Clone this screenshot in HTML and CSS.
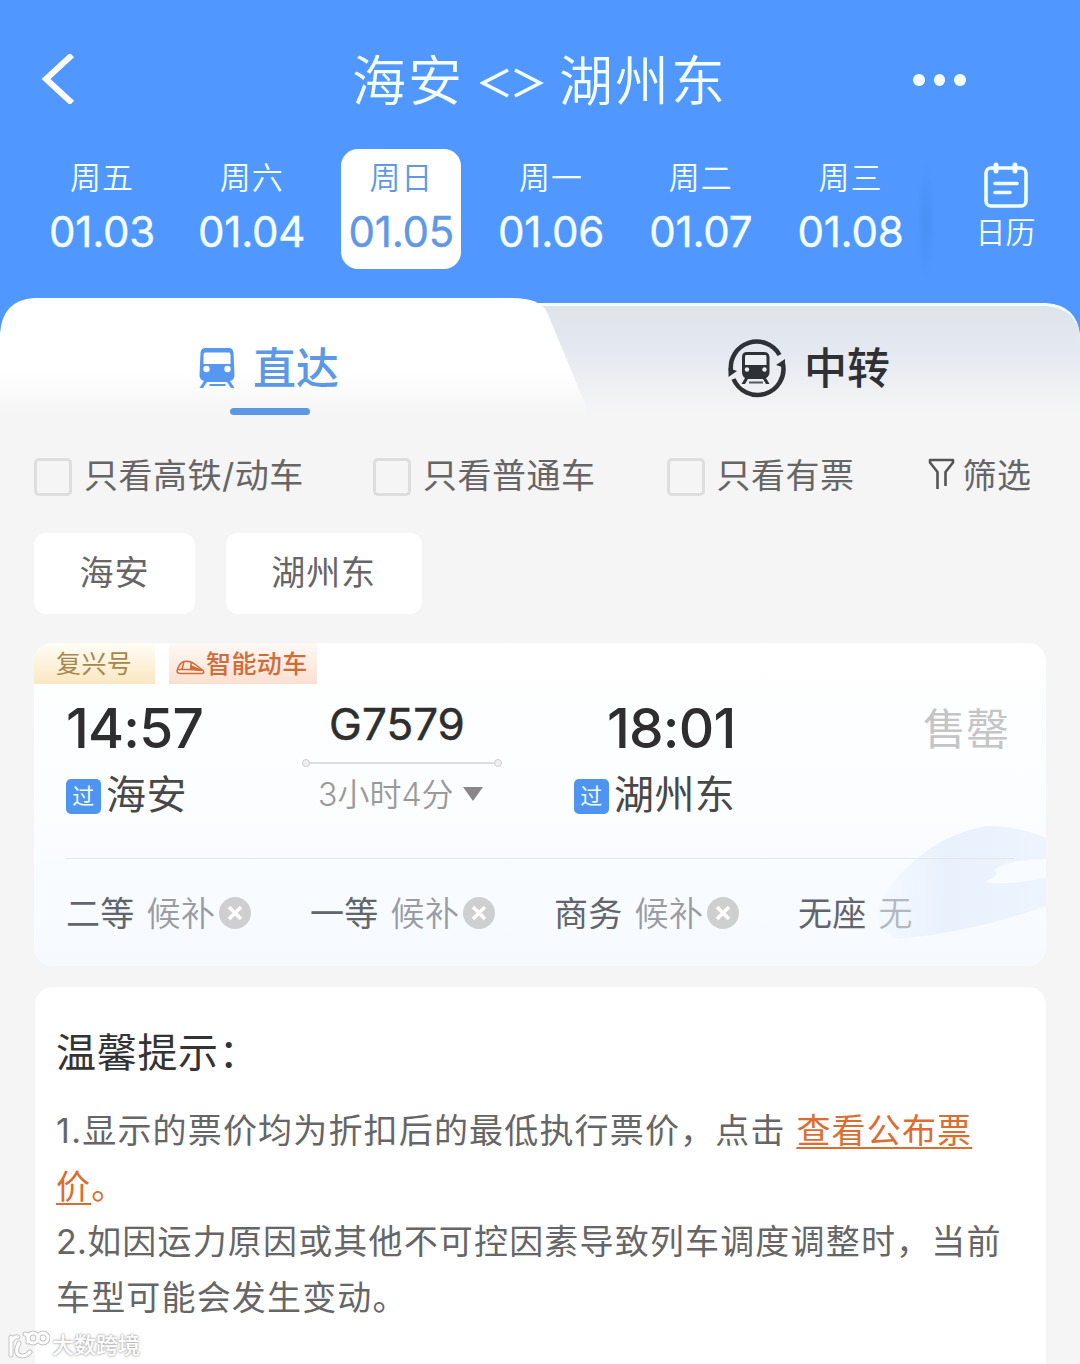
FILE: index.html
```html
<!DOCTYPE html>
<html lang="zh-CN">

<head>
    <meta charset="utf-8">
    <title>海安 - 湖州东</title>
    <meta name="viewport" content="width=device-width, initial-scale=1">
    <link rel="stylesheet" href="styles.css">
</head>

<body>
    <header class="header">
        <div class="navbar">
            <svg class="back" width="36" height="50" viewBox="0 0 36 50">
                <path d="M32 1 6 25 32 49" fill="none" stroke="#fff" stroke-width="6" />
            </svg>
            <h1 class="title"><span>海安</span><svg class="arrows" width="64" height="32" viewBox="0 0 64 32" fill="none" stroke="#f4ffff" stroke-width="3.600"><path d="M28 3 3 16 28 29M35 3 60 16 35 29" /></svg><span>湖州东</span></h1>
            <div class="more"><i></i><i></i><i></i></div>
        </div>
        <div class="dates">
            <div class="day"><span class="week">周五</span><span class="date">01.03</span></div>
            <div class="day"><span class="week">周六</span><span class="date">01.04</span></div>
            <div class="day active"><span class="week">周日</span><span class="date">01.05</span></div>
            <div class="day"><span class="week">周一</span><span class="date">01.06</span></div>
            <div class="day"><span class="week">周二</span><span class="date">01.07</span></div>
            <div class="day"><span class="week">周三</span><span class="date">01.08</span></div>
            <div class="calendar">
                <svg width="46" height="46" viewBox="0 0 46 46" fill="none" stroke="#f0ffff" stroke-width="3.600" stroke-linecap="round">
                    <rect x="3" y="6" width="40" height="38" rx="5" />
                    <path d="M13 3v6M32 3v6" stroke-width="5" />
                    <path d="M12 21.500h22M12 30.500h15" />
                </svg>
                <span>日历</span>
            </div>
        </div>
    </header>

    <nav class="tabs">
        <svg class="tabs-bg" width="1080" height="122" viewBox="0 0 1080 122">
            <defs>
                <linearGradient id="tabLeft" x1="0" y1="0" x2="0" y2="1">
                    <stop offset="0.6" stop-color="#fff" />
                    <stop offset="0.97" stop-color="#f5f5f5" />
                </linearGradient>
                <linearGradient id="tabRight" gradientUnits="userSpaceOnUse" x1="0" y1="8" x2="0" y2="114">
                    <stop offset="0" stop-color="#dfe3ea" />
                    <stop offset="0.4" stop-color="#e4e8f0" />
                    <stop offset="1" stop-color="#f5f5f5" />
                </linearGradient>
            </defs>
            <rect width="1080" height="60" fill="#5098ff" />
            <path d="M500 5h546q31 2 34 32v83H500z" fill="#f4fdff" />
            <path d="M500 8h545q33 2 35 32v82H500z" fill="url(#tabRight)" />
            <path d="M0 36Q2 2 34 0H512Q540 0 547 14L586 108V122H0z" fill="url(#tabLeft)" />
        </svg>
        <div class="tab tab-direct">
            <svg width="36" height="42" viewBox="0 0 36 42">
                <path d="M6 1H30Q34 1 34.500 6L35.500 28Q35.500 33 31 34L35.500 41H32L28 35H8L4 41H.5L5 34Q.5 33 .5 28L1.500 6Q2 1 6 1z" fill="#5697f0" />
                <path d="M6 5.500H30Q31.500 5.500 31.500 8V17H4.500V8Q4.500 5.500 6 5.500z" fill="#fff" />
                <circle cx="7.500" cy="22" r="3.200" fill="#fff" />
                <circle cx="28.500" cy="22" r="3.200" fill="#fff" />
                <path d="M10.500 38h16" stroke="#5697f0" stroke-width="2" />
            </svg>
            <span>直达</span>
        </div>
        <div class="tab tab-transfer">
            <svg width="58" height="60" viewBox="0 0 58 60">
                <g fill="none" stroke="#2e3236" stroke-width="4.500">
                    <path d="M3 33A26 26 0 0 1 51.500 17" />
                    <path d="M55 26A26 26 0 0 1 5.500 41" />
                </g>
                <path d="M.5 39V30L9 33zM57 21V30L48 27z" fill="#2e3236" />
                <path d="M19 14H36Q41 14 41.500 19V34Q41.500 38 38 40L41.500 46H38L35 41H20L17 46H13.500L17 40Q14 38 14 34V19Q14 14 19 14z" fill="#2e3236" />
                <path d="M18 17H37.500Q38.500 17 38.500 19V27H17V19Q17 17 18 17z" fill="#eceff4" />
                <circle cx="19" cy="31.500" r="2.200" fill="#eceff4" />
                <circle cx="36.500" cy="31.500" r="2.200" fill="#eceff4" />
                <path d="M21 44.500h14" stroke="#555a60" stroke-width="2" />
            </svg>
            <span>中转</span>
        </div>
    </nav>

    <section class="filters">
        <label class="check"><i class="box"></i>只看高铁/动车</label>
        <label class="check"><i class="box"></i>只看普通车</label>
        <label class="check"><i class="box"></i>只看有票</label>
        <div class="screen">
            <svg width="27" height="32" viewBox="0 0 27 32" fill="none" stroke="#555" stroke-width="2.600" stroke-linejoin="round">
                <path d="M9.500 31V14L2 4.500V2H25V4.500L17.500 14V28" />
            </svg>
            筛选
        </div>
    </section>

    <section class="stations">
        <div class="station">海安</div>
        <div class="station">湖州东</div>
    </section>

    <section class="train">
        <svg class="train-bg" width="172" height="116" viewBox="0 0 172 116">
            <defs>
                <linearGradient id="loco" x1="0" y1="0" x2="1" y2="0">
                    <stop offset="0" stop-color="#ecf3fe" stop-opacity="0.3" />
                    <stop offset="0.4" stop-color="#e9f1fd" />
                    <stop offset="1" stop-color="#ecf4fe" />
                </linearGradient>
            </defs>
            <path d="M172 14Q145 2 112 2Q70 10 40 37Q14 60 4 84Q2 110 26 115Q100 108 172 82z" fill="url(#loco)" />
            <path d="M172 35Q135 35 120 46Q128 51 110 58Q130 62 172 54z" fill="#f8fbff" />
        </svg>
        <div class="tags">
            <span class="tag tag-gold">复兴号</span>
            <span class="tag tag-orange">
                <svg width="29" height="15" viewBox="0 0 29 15" fill="none" stroke="#cf6c38" stroke-width="1.500">
                    <path d="M1 11Q3 3 8 1.500Q14 0 20 5L27 10.500Q29 13 26 13.500H5Q1 13.500 1 11zM2 9.500H15V1.500M8 1.500L6 9.500" />
                    <path d="M15 6L26 10.500 15 9.500z" fill="#cf6c38" />
                </svg>智能动车
            </span>
        </div>
        <div class="trip">
            <div class="stop">
                <div class="time">14:57</div>
                <div class="place"><b class="pass">过</b>海安</div>
            </div>
            <div class="route">
                <div class="number">G7579</div>
                <div class="line"></div>
                <div class="duration"><span><em>3</em>小时<em>4</em>分</span><i class="caret"></i></div>
            </div>
            <div class="stop stop-end">
                <div class="time">18:01</div>
                <div class="place"><b class="pass">过</b>湖州东</div>
            </div>
            <div class="soldout">售罄</div>
        </div>
        <div class="seats">
            <div class="seat">二等<span class="wait">候补</span><svg class="close" viewBox="0 0 32 32"><circle cx="16" cy="16" r="16" /><path d="M10 10l12 12M22 10l-12 12" /></svg></div>
            <div class="seat">一等<span class="wait">候补</span><svg class="close" viewBox="0 0 32 32"><circle cx="16" cy="16" r="16" /><path d="M10 10l12 12M22 10l-12 12" /></svg></div>
            <div class="seat">商务<span class="wait">候补</span><svg class="close" viewBox="0 0 32 32"><circle cx="16" cy="16" r="16" /><path d="M10 10l12 12M22 10l-12 12" /></svg></div>
            <div class="seat">无座<span class="wait none">无</span></div>
        </div>
    </section>

    <section class="tips">
        <h2>温馨提示：</h2>
        <p><em class="first">1.</em>显示的票价均为折扣后的最低执行票价，点击 <a>查看公布票<br>价</a><span class="stop-mark">。</span></p>
        <p><em>2.</em>如因运力原因或其他不可控因素导致列车调度调整时，当前<br>车型可能会发生变动。</p>
    </section>

    <div class="watermark">
        <svg width="42" height="30" viewBox="0 0 42 30" fill="none" stroke-linecap="round">
            <g stroke="#c4c4c4" stroke-width="5">
                <path d="M3 7V25M11 13Q5 25 14 26Q19 26 22 22M4 10Q7 6 10 7M17 4Q21 4 20 12" />
                <circle cx="25" cy="8" r="5" />
                <circle cx="35" cy="8" r="5" />
            </g>
            <g stroke="#fff" stroke-width="3">
                <path d="M3 7V25M11 13Q5 25 14 26Q19 26 22 22M4 10Q7 6 10 7M17 4Q21 4 20 12" />
                <circle cx="25" cy="8" r="5" />
                <circle cx="35" cy="8" r="5" />
            </g>
        </svg>
        <span>大数跨境</span>
    </div>
</body>

</html>
```
FILE: styles.css
```css
* {
    box-sizing: border-box;
}

html,
body {
    height: 1364px;
    overflow: hidden;
}

body {
    position: relative;
    margin: 0;
    background-color: #f5f5f5;
    color: #666;
    font-family: Inter, "Noto Sans CJK SC", sans-serif;
    font-size: 34px;
}

h1,
h2,
p {
    margin: 0;
    font-weight: 400;
}

em,
i {
    font-style: normal;
}

/* header */
.header {
    height: 298px;
    background-color: #5098ff;
    color: #f4ffff;
}

.navbar {
    display: grid;
    grid-template-columns: 351px 562px 1fr;
    align-items: center;
    height: 149px;
}

.back {
    margin: 9px 0 0 40px;
}

.title {
    display: flex;
    align-items: center;
    height: 80px;
    margin: 7px 0 0 1px;
    font-family: "Noto Sans CJK SC", sans-serif;
    font-size: 54px;
    font-weight: 350;
    line-height: 80px;
    letter-spacing: 2px;
}

.arrows {
    margin: 9px 15px 0 16px;
}

.more {
    display: flex;
    gap: 9px;
    margin-top: 11px;
}

.more i {
    width: 11.500px;
    height: 12px;
    border-radius: 50%;
    background-color: #f8ffff;
}

.dates {
    display: flex;
    gap: 29.700px;
    padding-left: 42px;
}

.day {
    display: flex;
    flex-direction: column;
    align-items: center;
    width: 120px;
    height: 120px;
    padding-top: 6px;
    border-radius: 17px;
}

.week {
    height: 46px;
    font-size: 31px;
    font-weight: 350;
    line-height: 46px;
    letter-spacing: 1px;
}

.date {
    height: 60px;
    font-size: 42px;
    font-weight: 400;
    line-height: 62px;
    letter-spacing: -0.200px;
    -webkit-text-stroke: 0.400px;
}

.active {
    background-color: #fff;
    color: #5f98e4;
}

.calendar {
    display: flex;
    flex-direction: column;
    align-items: center;
    flex: 1;
    height: 135px;
    margin-left: -22px;
    padding: 13px 0 0 13px;
    background: radial-gradient(ellipse 10px 60px at 8px 72px, #4990f5, #5098ff) no-repeat;
}

.calendar span {
    font-size: 30px;
    font-weight: 350;
    line-height: 48px;
}

/* tabs */
.tabs {
    position: relative;
    display: flex;
    height: 140px;
}

.tabs-bg {
    position: absolute;
    top: 0;
    left: 0;
}

.tab {
    position: relative;
    display: flex;
    align-items: center;
    height: 140px;
    padding-bottom: 1px;
    font-size: 43px;
    font-weight: 500;
}

.tab span {
    margin-top: -5px;
}

.tab-direct {
    width: 540px;
    padding-left: 199px;
    color: #5b98e6;
    gap: 18px;
}

.tab-direct::after {
    content: "";
    position: absolute;
    left: 230px;
    top: 110px;
    width: 80px;
    height: 7px;
    border-radius: 4px;
    background-color: #5b98e6;
}

.tab-transfer {
    padding-left: 188px;
    color: #2e3033;
    gap: 18px;
}

/* filters */
.filters {
    display: grid;
    grid-template-columns: 339px 293.500px 261px 1fr;
    height: 76px;
    padding-left: 34px;
}

.check,
.screen {
    display: flex;
    align-items: center;
    white-space: nowrap;
    line-height: 76px;
    letter-spacing: 0.5px;
}

.box {
    width: 38px;
    height: 38px;
    margin: 2px 12px 0 0;
    border: 3px solid #dedede;
    border-radius: 5px;
}

.screen svg {
    margin: -5px 8px 0 0;
}

/* stations */
.stations {
    display: flex;
    gap: 31px;
    padding: 19px 0 0 34px;
}

.station {
    height: 81px;
    padding: 0 45.500px;
    border-radius: 12px;
    background-color: #fff;
    line-height: 79px;
    letter-spacing: 0.900px;
}

/* train card */
.train {
    position: relative;
    height: 323px;
    margin: 29px 34px 0;
    border-radius: 18px;
    background: linear-gradient(#fff, #fbfdff 50%, #f6faff);
    overflow: hidden;
}

.train-bg {
    position: absolute;
    right: 0;
    top: 181px;
}

.tags {
    display: flex;
    gap: 14px;
    height: 41px;
}

.tag {
    display: flex;
    align-items: center;
    height: 41px;
    padding-bottom: 3px;
    font-size: 25px;
    font-weight: 500;
    letter-spacing: 0.400px;
}

.tag-gold {
    width: 121px;
    padding-left: 22px;
    background: linear-gradient(#fffdf6, #fae7c1);
    color: #a8874c;
    font-weight: 400;
}

.tag-orange {
    width: 148px;
    padding-left: 7px;
    background: linear-gradient(#fff9f6, #fadfd0);
    color: #cf6c38;
}

.tag svg {
    margin: 10px 1px 0 0;
}

.trip {
    position: relative;
    display: grid;
    grid-template-columns: 236px 272px 349px 1fr;
    height: 175px;
    margin: 0 32px;
    border-bottom: 1px solid #e3e6ea;
}

.time {
    height: 86px;
    color: #2e2e2e;
    font-size: 55px;
    font-weight: 500;
    line-height: 88px;
    letter-spacing: -0.800px;
}

.stop-end .time {
    padding-left: 33px;
}

.place {
    display: flex;
    align-items: center;
    height: 50px;
    color: #484848;
    font-size: 40px;
    line-height: 48px;
    letter-spacing: 0.400px;
}

.pass {
    width: 35px;
    height: 35px;
    margin: 2px 5px 0 0;
    border-radius: 5px;
    background-color: #4f94f0;
    color: #f0ffff;
    font-size: 22px;
    font-weight: 400;
    line-height: 35px;
    text-align: center;
}

.route {
    width: 200px;
}

.number {
    height: 78px;
    padding-right: 10px;
    color: #2e2e2e;
    font-size: 44px;
    font-weight: 400;
    line-height: 80px;
    text-align: center;
    -webkit-text-stroke: 0.500px;
}

.line {
    display: flex;
    align-items: center;
    justify-content: space-between;
    height: 2px;
    background-color: #dcdde0;
}

.line::before,
.line::after {
    content: "";
    width: 6px;
    height: 6px;
    border: 1px solid #ccc;
    border-radius: 50%;
    background-color: #f0f0f0;
}

.duration {
    display: flex;
    align-items: center;
    gap: 9px;
    height: 60px;
    padding-left: 16px;
    color: #999;
    font-size: 32px;
    font-weight: 350;
    white-space: nowrap;
}

.duration span {
    margin-top: -4px;
}

.caret {
    border: 10.500px solid transparent;
    border-top: 14px solid #888;
    border-bottom: 0;
}

.soldout {
    color: #c5c5c5;
    font-size: 43px;
    line-height: 91px;
    white-space: nowrap;
}

.seats {
    position: relative;
    display: flex;
    padding-left: 32px;
}

.seat {
    display: flex;
    align-items: center;
    width: 244px;
    height: 104px;
    color: #62666c;
    letter-spacing: 0.300px;
}

.wait {
    margin: 0 4px 0 12px;
    color: #999da3;
    font-weight: 350;
}

.none {
    color: #b4b8be;
}

.close {
    width: 32px;
    height: 32px;
    margin-top: 3px;
    fill: #cfcfcf;
    stroke: #fff;
    stroke-width: 3.500;
}

.close circle {
    stroke: none;
}

/* tips */
.tips {
    height: 400px;
    margin: 21px 34px 0 35px;
    padding: 31px 0 0 21px;
    border-radius: 18px;
    background-color: #fff;
    line-height: 55.500px;
    letter-spacing: 1.170px;
    white-space: nowrap;
}

.tips h2 {
    height: 85px;
    color: #333;
    font-size: 40px;
    line-height: 70px;
    letter-spacing: 0.700px;
}

.tips em {
    letter-spacing: 0.300px;
}

.tips .first {
    letter-spacing: 1.300px;
}

.tips a,
.stop-mark {
    color: #dd6c30;
}

.tips a {
    text-decoration: underline;
    text-decoration-thickness: 2px;
    text-underline-offset: 4px;
    text-decoration-skip-ink: none;
}

/* watermark */
.watermark {
    position: absolute;
    left: 8px;
    bottom: 4px;
    display: flex;
    align-items: center;
    gap: 2px;
    color: #fff;
    font-size: 22px;
    font-weight: 500;
    line-height: 30px;
    text-shadow: 0 0 2px #aaa, 0 0 3px #aaa;
}
```
